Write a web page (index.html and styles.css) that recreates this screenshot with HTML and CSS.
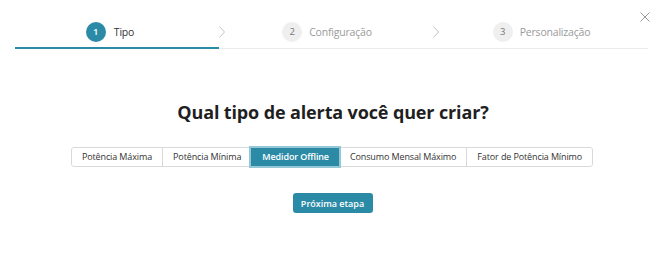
FILE: index.html
```html
<!DOCTYPE html>
<html lang="pt-BR">
<head>
<meta charset="utf-8">
<title>Novo alerta</title>
<link rel="stylesheet" href="styles.css">
</head>
<body>
<div class="modal">
  <button class="close" aria-label="Fechar">
    <svg width="10" height="10" viewBox="0 0 10 10"><path d="M0.5 0.5L9.5 9.5M9.5 0.5L0.5 9.5" stroke="#9a9a9a" stroke-width="1" fill="none"/></svg>
  </button>
  <div class="steps">
    <div class="step step-first active">
      <div class="step-body"><span class="num">1</span><span class="label">Tipo</span></div>
    </div>
    <div class="step">
      <svg class="chev" width="6" height="12" viewBox="0 0 6 12"><path d="M0.5 0.5L5.5 6L0.5 11.5" stroke="#c4c4c4" stroke-width="1" fill="none"/></svg>
      <div class="step-body"><span class="num">2</span><span class="label">Configuração</span></div>
    </div>
    <div class="step">
      <svg class="chev" width="6" height="12" viewBox="0 0 6 12"><path d="M0.5 0.5L5.5 6L0.5 11.5" stroke="#c4c4c4" stroke-width="1" fill="none"/></svg>
      <div class="step-body"><span class="num">3</span><span class="label">Personalização</span></div>
    </div>
  </div>
  <h1 class="title">Qual tipo de alerta você quer criar?</h1>
  <div class="choices">
    <div class="group">
      <button class="seg">Potência Máxima</button>
      <button class="seg">Potência Mínima</button>
      <button class="seg selected">Medidor Offline</button>
      <button class="seg">Consumo Mensal Máximo</button>
      <button class="seg">Fator de Potência Mínimo</button>
    </div>
  </div>
  <div class="actions">
    <button class="next">Próxima etapa</button>
  </div>
</div>
</body>
</html>
```
FILE: styles.css
```css
* { box-sizing: border-box; }
html, body { margin: 0; padding: 0; background: #fff; }
body { font-family: "Open Sans", "Noto Sans", sans-serif; color: #333; }

.modal { position: relative; width: 659px; height: 261px; padding: 0 11px 0 15px; }

.close { position: absolute; top: 12px; right: 9px; width: 10px; height: 10px; padding: 0; border: 0; background: none; display: block; }
.close svg { display: block; }

.steps { display: flex; border-bottom: 1px solid #ebebeb; width: 633px; padding-top: 22px; }
.step { display: flex; align-items: center; height: 27px; padding-bottom: 7px; margin-bottom: -1px; border-bottom: 1px solid transparent; }
.step-first { width: 204px; padding-right: 14px; }
.step:nth-child(2) { width: 214px; padding-right: 4px; }
.step:nth-child(3) { width: 215px; padding-right: 4px; }
.step.active { border-bottom: 2px solid #2b8ba7; padding-bottom: 6px; }
.chev { display: block; flex: none; margin-top: 1px; }
.step-body { flex: 1; display: flex; align-items: center; justify-content: center; }
.num { width: 20px; height: 20px; border-radius: 50%; background: #efefef; color: #777; font-size: 9.5px; display: flex; align-items: center; justify-content: center; }
.label { margin-left: 7px; font-size: 10.5px; color: #9a9a9a; letter-spacing: -0.2px; }
.step-first .label { margin-left: 8px; }
.active .num { background: #2b8ba7; color: #fff; font-weight: 600; }
.active .label { color: #333; }

.title { margin: 50px 0 0; text-align: center; font-size: 18px; line-height: 26px; font-weight: 700; color: #1f1f1f; letter-spacing: -0.13px; padding-left: 3px; }

.choices { display: flex; justify-content: center; margin-top: 22px; padding-left: 1px; }
.group { display: flex; border: 1px solid #d9d9d9; border-radius: 3px; height: 20px; }
.seg { border: 0; border-left: 1px solid #d9d9d9; background: #fff; font-family: inherit; font-size: 9px; color: #333; padding: 0 10px; height: 18px; line-height: 18px; letter-spacing: -0.12px; }
.seg:first-child { border-left: 0; border-radius: 3px 0 0 3px; }
.seg:last-child { border-radius: 0 3px 3px 0; }
.seg.selected { background: #2b8ba7; color: #fff; font-weight: 600; box-shadow: 0 0 0 2px #95c8d6; position: relative; z-index: 1; border-left-color: #2b8ba7; }

.actions { display: flex; justify-content: center; margin-top: 26px; padding-left: 2px; }
.next { border: 0; border-radius: 3px; background: #2b8ba7; color: #fff; font-family: inherit; font-size: 9px; font-weight: 600; width: 80px; height: 20px; padding: 0; }
```
